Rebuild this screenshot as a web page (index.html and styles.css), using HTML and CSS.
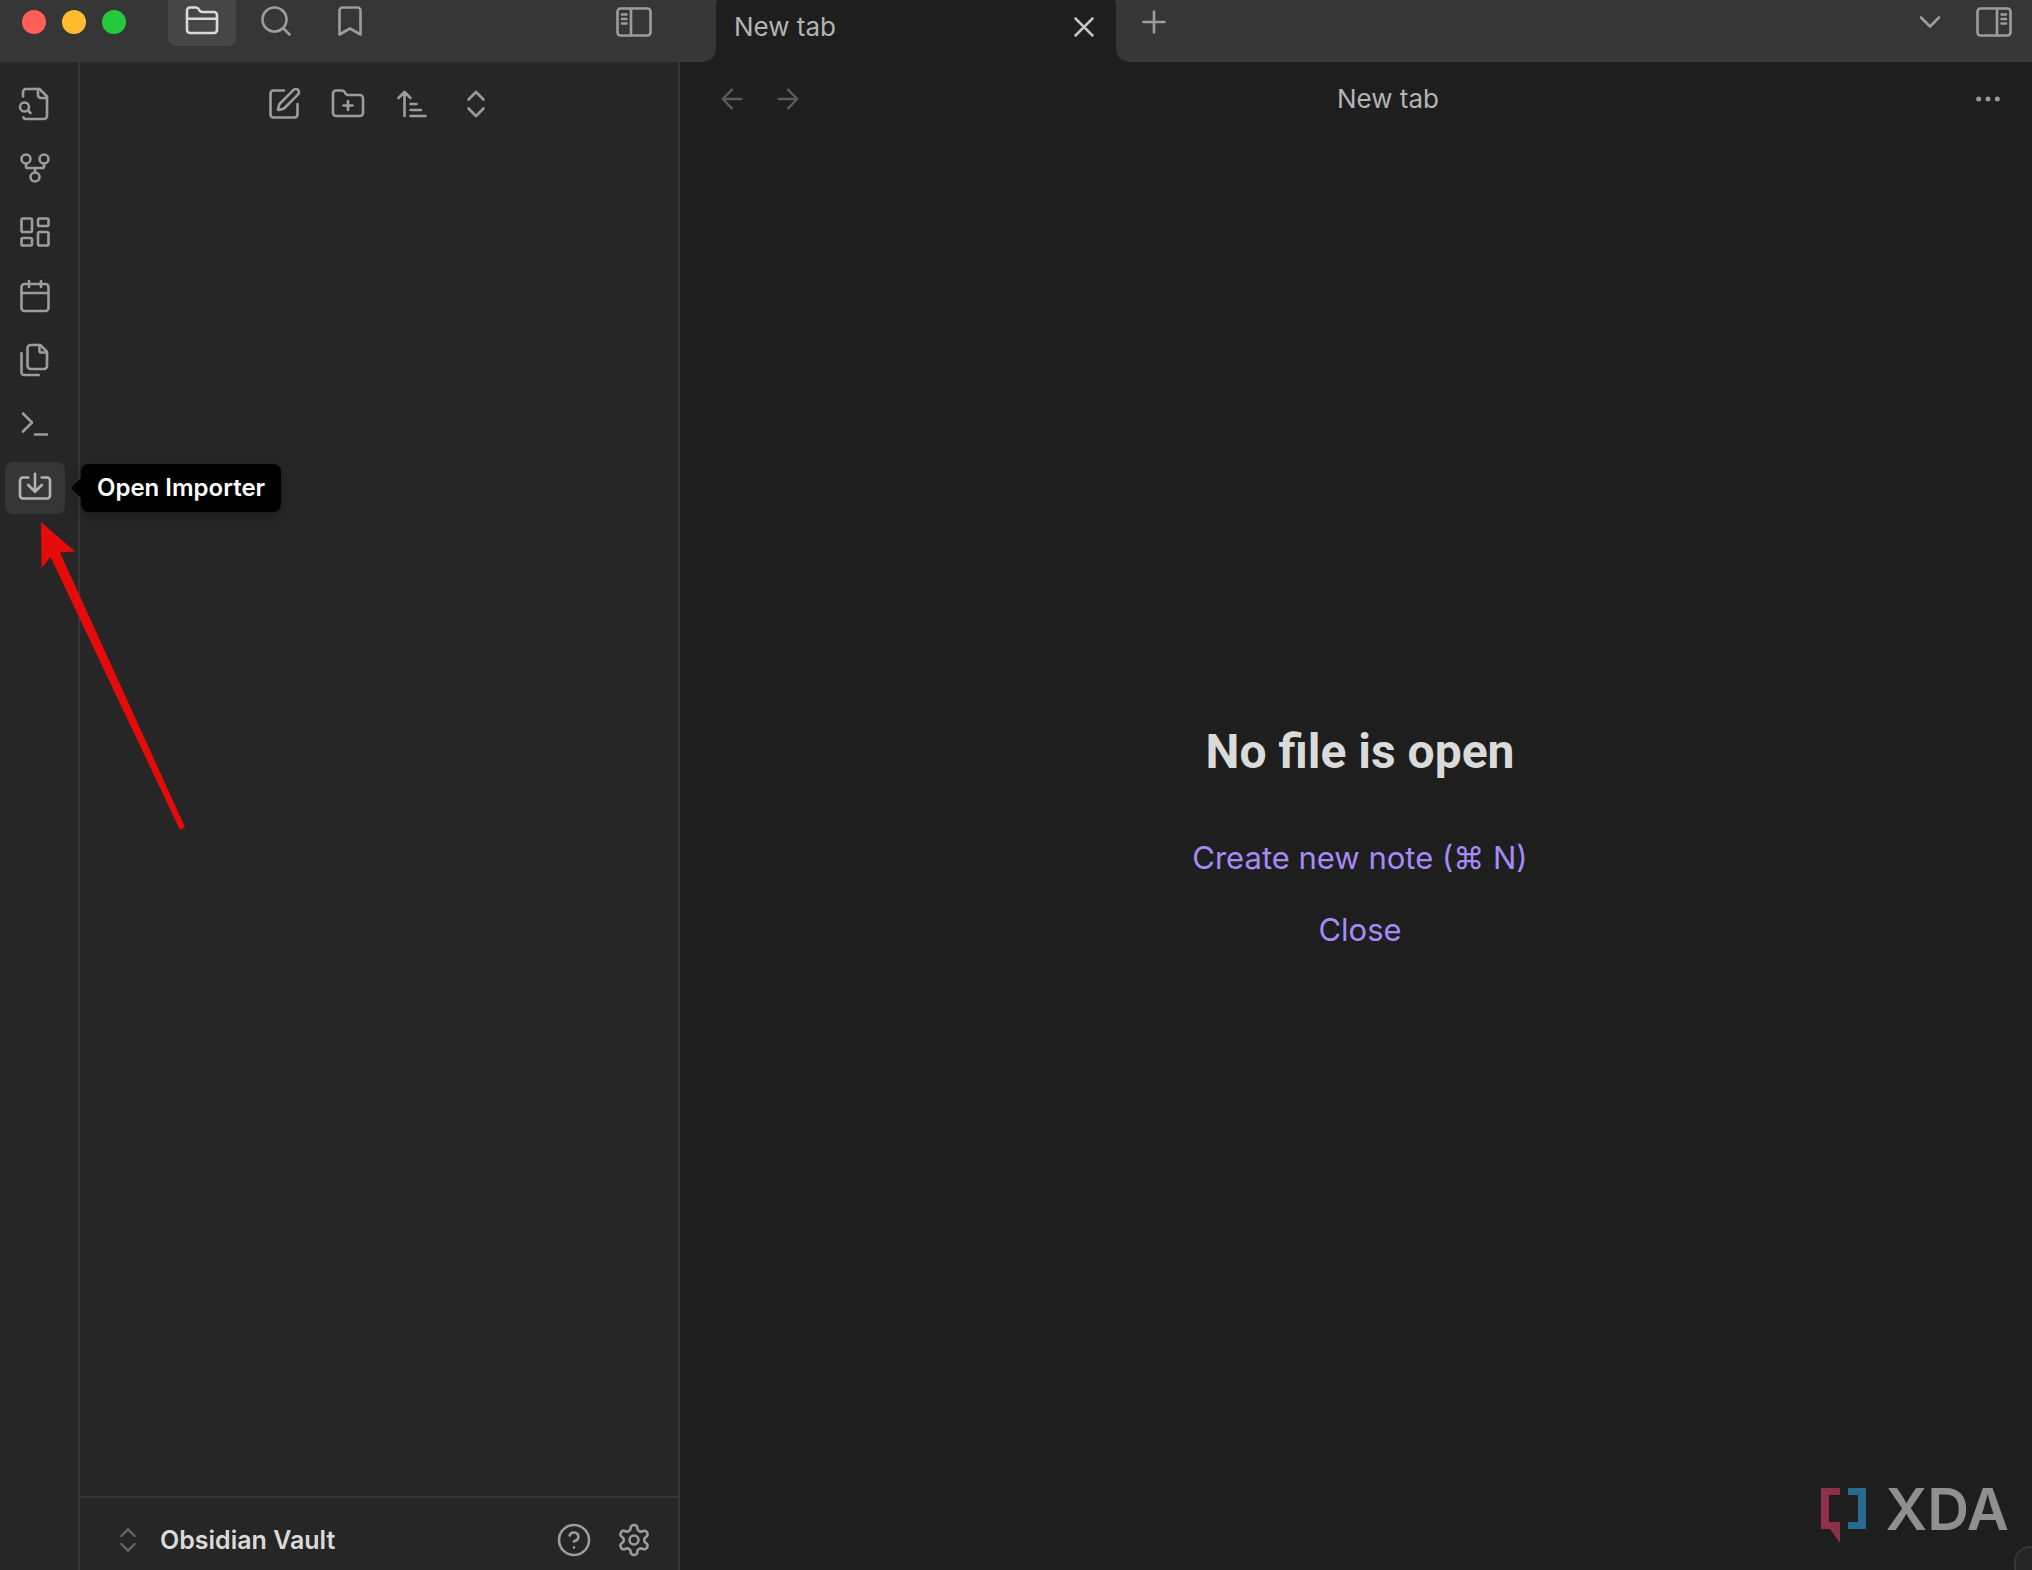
FILE: index.html
```html
<!DOCTYPE html>
<html lang="en">
<head>
<meta charset="utf-8">
<title>New tab - Obsidian Vault</title>
<link rel="stylesheet" href="styles.css">
</head>
<body>
<div class="app">
  <header class="titlebar">
    <div class="titlebar-left">
      <div class="lights"><span class="light red"></span><span class="light yellow"></span><span class="light green"></span></div>
      <div class="panel-tabs">
        <button class="bar-button active" aria-label="Files"><svg class="icon" viewBox="0 0 24 24"><path d="M20 20a2 2 0 0 0 2-2V8a2 2 0 0 0-2-2h-7.900a2 2 0 0 1-1.690-.9L9.600 3.900A2 2 0 0 0 7.930 3H4a2 2 0 0 0-2 2v13a2 2 0 0 0 2 2Z"/><path d="M2 10.500h20"/></svg></button>
        <button class="bar-button" aria-label="Search"><svg class="icon" viewBox="0 0 24 24"><circle cx="11" cy="11" r="8"/><path d="m21 21-4.300-4.300"/></svg></button>
        <button class="bar-button" aria-label="Bookmarks"><svg class="icon" viewBox="0 0 24 24"><path d="m19 21-7-4-7 4V5a2 2 0 0 1 2-2h10a2 2 0 0 1 2 2v16z"/></svg></button>
      </div>
      <button class="bar-button" aria-label="Collapse left sidebar"><svg class="icon" viewBox="0 0 24 24"><rect x="1" y="3" width="22" height="18" rx="2"/><path d="M10 3v18M4 7h3M4 10h3M4 13h3"/></svg></button>
    </div>
    <div class="tab">
      <span>New tab</span>
      <button class="tab-close" aria-label="Close tab"><svg class="icon" viewBox="0 0 24 24"><path d="M18 6 6 18M6 6l12 12"/></svg></button>
    </div>
    <button class="bar-button add-tab" aria-label="Add tab"><svg class="icon" viewBox="0 0 24 24"><path d="M5 12h14M12 5v14"/></svg></button>
    <div class="titlebar-right">
      <button class="bar-button narrow" aria-label="Tab list"><svg class="icon" viewBox="0 0 24 24"><path d="m6 9 6 6 6-6"/></svg></button>
      <button class="bar-button narrow" aria-label="Expand right sidebar"><svg class="icon" viewBox="0 0 24 24"><rect x="1" y="3" width="22" height="18" rx="2"/><path d="M14 3v18M17 7h3M17 10h3M17 13h3"/></svg></button>
    </div>
  </header>

  <div class="workspace">
    <nav class="ribbon" aria-label="Ribbon">
      <button class="tool" aria-label="Open quick switcher"><svg class="icon" viewBox="0 0 24 24"><path d="M14 2v4a2 2 0 0 0 2 2h4"/><path d="M4.268 21a2 2 0 0 0 1.727 1H18a2 2 0 0 0 2-2V7l-5-5H6a2 2 0 0 0-2 2v3"/><path d="m9 18-1.500-1.500"/><circle cx="5" cy="14" r="3"/></svg></button>
      <button class="tool" aria-label="Open graph view"><svg class="icon" viewBox="0 0 24 24"><circle cx="12" cy="18" r="3"/><circle cx="6" cy="6" r="3"/><circle cx="18" cy="6" r="3"/><path d="M18 9v2c0 .6-.4 1-1 1H7c-.6 0-1-.4-1-1V9M12 12v3"/></svg></button>
      <button class="tool" aria-label="Create new canvas"><svg class="icon" viewBox="0 0 24 24"><rect x="3" y="3" width="7" height="9" rx="1"/><rect x="14" y="3" width="7" height="5" rx="1"/><rect x="14" y="12" width="7" height="9" rx="1"/><rect x="3" y="16" width="7" height="5" rx="1"/></svg></button>
      <button class="tool" aria-label="Open today's daily note"><svg class="icon" viewBox="0 0 24 24"><rect x="3" y="4" width="18" height="18" rx="2"/><path d="M8 2v4M16 2v4M3 10h18"/></svg></button>
      <button class="tool" aria-label="Insert template"><svg class="icon" viewBox="0 0 24 24"><path d="M15 2v4a1 1 0 0 0 1 1h4"/><path d="M15.500 2H9a2 2 0 0 0-2 2v12a2 2 0 0 0 2 2h9a2 2 0 0 0 2-2V6.500L15.500 2z"/><path d="M3 7.600v12.800c0 .4.200.8.500 1.100.3.300.7.500 1.100.5h9.800"/></svg></button>
      <button class="tool" aria-label="Open command palette"><svg class="icon" viewBox="0 0 24 24"><path d="m4 17 6-6-6-6M12 19h8"/></svg></button>
      <div class="importer">
        <button class="tool hovered" aria-describedby="importer-tip" aria-label="Importer"><svg class="icon" viewBox="0 0 24 24"><path d="M16.500 5H20a2 2 0 0 1 2 2v10a2 2 0 0 1-2 2H4a2 2 0 0 1-2-2V7a2 2 0 0 1 2-2h3.500"/><path d="M12 2.500V14M7.500 10l4.500 4.500 4.500-4.500"/></svg></button>
        <span class="tooltip" id="importer-tip" role="tooltip">Open Importer</span>
        <svg class="pointer" viewBox="0 0 150 312" aria-hidden="true"><path d="M1 1 35 30.500 20 31.500 145 306 140 309 10.500 36 1.500 47Z"/></svg>
      </div>
    </nav>

    <aside class="sidebar">
      <div class="sidebar-tools">
        <button class="tool" aria-label="New note"><svg class="icon" viewBox="0 0 24 24"><path d="M12 3H5a2 2 0 0 0-2 2v14a2 2 0 0 0 2 2h14a2 2 0 0 0 2-2v-7"/><path d="M18.375 2.625a1 1 0 0 1 3 3l-9.013 9.014a2 2 0 0 1-.853.505l-2.873.84a.5.5 0 0 1-.62-.62l.84-2.873a2 2 0 0 1 .506-.852z"/></svg></button>
        <button class="tool" aria-label="New folder"><svg class="icon" viewBox="0 0 24 24"><path d="M12 10v6M9 13h6"/><path d="M20 20a2 2 0 0 0 2-2V8a2 2 0 0 0-2-2h-7.900a2 2 0 0 1-1.690-.9L9.600 3.900A2 2 0 0 0 7.930 3H4a2 2 0 0 0-2 2v13a2 2 0 0 0 2 2Z"/></svg></button>
        <button class="tool" aria-label="Change sort order"><svg class="icon" viewBox="0 0 24 24"><path d="m3 8 4-4 4 4M7 4v16M11 12h4M11 16h7M11 20h10"/></svg></button>
        <button class="tool" aria-label="Expand all"><svg class="icon" viewBox="0 0 24 24"><path d="m7 15 5 5 5-5M7 9l5-5 5 5"/></svg></button>
      </div>
      <div class="file-list"></div>
      <footer class="vault">
        <button class="vault-switch"><svg class="icon small faint" viewBox="0 0 24 24"><path d="m7 15 5 5 5-5M7 9l5-5 5 5"/></svg><span>Obsidian Vault</span></button>
        <button class="tool" aria-label="Help"><svg class="icon" viewBox="0 0 24 24"><circle cx="12" cy="12" r="10"/><path d="M9.090 9a3 3 0 0 1 5.830 1c0 2-3 3-3 3M12 17h.01"/></svg></button>
        <button class="tool" aria-label="Settings"><svg class="icon" viewBox="0 0 24 24"><path d="M12.220 2h-.44a2 2 0 0 0-2 2v.18a2 2 0 0 1-1 1.730l-.43.25a2 2 0 0 1-2 0l-.15-.08a2 2 0 0 0-2.730.73l-.22.38a2 2 0 0 0 .73 2.730l.15.1a2 2 0 0 1 1 1.720v.51a2 2 0 0 1-1 1.740l-.15.09a2 2 0 0 0-.73 2.730l.22.38a2 2 0 0 0 2.730.73l.15-.08a2 2 0 0 1 2 0l.43.25a2 2 0 0 1 1 1.730V20a2 2 0 0 0 2 2h.44a2 2 0 0 0 2-2v-.18a2 2 0 0 1 1-1.730l.43-.25a2 2 0 0 1 2 0l.15.08a2 2 0 0 0 2.730-.73l.22-.39a2 2 0 0 0-.73-2.730l-.15-.08a2 2 0 0 1-1-1.740v-.5a2 2 0 0 1 1-1.740l.15-.09a2 2 0 0 0 .73-2.730l-.22-.38a2 2 0 0 0-2.730-.73l-.15.08a2 2 0 0 1-2 0l-.43-.25a2 2 0 0 1-1-1.730V4a2 2 0 0 0-2-2z"/><circle cx="12" cy="12" r="3"/></svg></button>
      </footer>
    </aside>

    <main class="pane">
      <div class="pane-header">
        <div class="history">
          <button class="nav-button" aria-label="Back" disabled><svg class="icon small" viewBox="0 0 24 24"><path d="m12 19-7-7 7-7M19 12H5"/></svg></button>
          <button class="nav-button" aria-label="Forward" disabled><svg class="icon small" viewBox="0 0 24 24"><path d="M5 12h14M12 5l7 7-7 7"/></svg></button>
        </div>
        <span class="pane-title">New tab</span>
        <button class="nav-button" aria-label="More options"><svg class="icon small" viewBox="0 0 24 24"><circle cx="5" cy="12" r="1"/><circle cx="12" cy="12" r="1"/><circle cx="19" cy="12" r="1"/></svg></button>
      </div>
      <div class="empty">
        <h1>No file is open</h1>
        <a href="#new">Create new note (⌘ N)</a>
        <a href="#close">Close</a>
      </div>
      <div class="status"></div>
      <div class="brand">
        <svg class="brand-mark" viewBox="0 0 45 55" aria-hidden="true"><path class="brand-red" d="M0 0h19v7H8v27h11v21L9 41H0z"/><path class="brand-blue" d="M27 0h18v41H27v-7h10V7H27z"/></svg>
        <span>XDA</span>
      </div>
    </main>
  </div>
</div>
</body>
</html>
```
FILE: styles.css
```css
* { box-sizing: border-box; }

body {
  margin: 0;
  background: #1e1e1e;
  color: #b3b3b3;
  font-family: Inter, "Liberation Sans", sans-serif;
  font-size: 26px;
  line-height: 32px;
}

button {
  display: flex;
  align-items: center;
  justify-content: center;
  margin: 0;
  padding: 0;
  border: 0;
  background: none;
  color: #9c9c9c;
  font: inherit;
}

.icon {
  display: block;
  flex: none;
  width: 36px;
  height: 36px;
  fill: none;
  stroke: currentColor;
  stroke-width: 1.75;
  stroke-linecap: round;
  stroke-linejoin: round;
}
.icon.small { width: 32px; height: 32px; }
.icon.faint { color: #666; }

.app {
  display: flex;
  flex-direction: column;
  height: 100vh;
  overflow: hidden;
}

/* Title bar */
.titlebar {
  display: flex;
  align-items: flex-start;
  flex: none;
  height: 62px;
  background: #363636;
  border-bottom: 1px solid #3a3a3a;
}
.titlebar-left {
  display: flex;
  align-items: flex-start;
  flex: none;
  width: 716px;
  padding: 0 48px 0 22px;
}
.lights { display: flex; gap: 16px; padding-top: 10px; }
.light { width: 24px; height: 24px; border-radius: 50%; }
.red { background: #ff5f57; }
.yellow { background: #febc2e; }
.green { background: #24c93c; }
.panel-tabs { display: flex; gap: 6px; margin: 0 auto 0 42px; }

.bar-button {
  width: 68px;
  height: 46px;
  padding-bottom: 2px;
  border-radius: 0 0 8px 8px;
}
.panel-tabs .bar-button { padding-bottom: 4px; }
.bar-button.active { background: #464646; color: #dadada; }
.bar-button.narrow { width: 60px; }

.tab {
  position: relative;
  display: flex;
  align-items: center;
  justify-content: space-between;
  flex: none;
  width: 400px;
  height: 62px;
  padding: 0 14px 8px 18px;
  border-radius: 4px 4px 0 0;
  background: #1e1e1e;
}
.tab::before,
.tab::after {
  content: "";
  position: absolute;
  bottom: 0;
  width: 12px;
  height: 12px;
}
.tab::before { right: 100%; background: radial-gradient(circle at 0 0, transparent 11px, #1e1e1e 12px); }
.tab::after { left: 100%; background: radial-gradient(circle at 100% 0, transparent 11px, #1e1e1e 12px); }
.tab-close { width: 36px; height: 36px; color: #c4c4c4; }
.tab-close .icon { width: 34px; height: 34px; }
.add-tab { margin-left: 4px; }
.titlebar-right { display: flex; gap: 4px; margin-left: auto; padding-right: 8px; }

/* Ribbon and file sidebar */
.workspace { display: flex; flex: 1; min-height: 0; }
.ribbon {
  display: flex;
  flex-direction: column;
  gap: 12px;
  flex: none;
  width: 80px;
  padding: 16px 0 0 5px;
  background: #262626;
  border-right: 2px solid #363636;
}
.tool { width: 60px; height: 52px; border-radius: 8px; }
.tool.hovered { background: #363636; color: #b3b3b3; }
.importer { position: relative; z-index: 2; }
.tooltip {
  position: absolute;
  top: 2px;
  left: 76px;
  padding: 8px 16px;
  border-radius: 8px;
  background: #000;
  box-shadow: 0 4px 12px rgba(0, 0, 0, .3);
  color: #fff;
  font-size: 24px;
  font-weight: 600;
  white-space: nowrap;
}
.tooltip::before {
  content: "";
  position: absolute;
  top: 14px;
  right: 100%;
  border: solid transparent;
  border-width: 10px 10px 10px 0;
  border-right-color: #000;
}
.pointer {
  position: absolute;
  top: 59px;
  left: 35px;
  width: 150px;
  height: 312px;
  fill: #e50b0b;
}

.sidebar {
  display: flex;
  flex-direction: column;
  flex: none;
  width: 600px;
  background: #262626;
  border-right: 2px solid #363636;
}
.sidebar-tools {
  display: flex;
  justify-content: center;
  gap: 4px;
  padding: 16px 0 16px 2px;
}
.file-list { flex: 1; }
.vault {
  display: flex;
  align-items: center;
  height: 74px;
  padding: 12px 14px 0 32px;
  border-top: 2px solid #363636;
}
.vault-switch {
  gap: 16px;
  margin-right: auto;
  color: #dadada;
  font-size: 25px;
  font-weight: 600;
}

/* Editor pane */
.pane {
  position: relative;
  display: flex;
  flex-direction: column;
  flex: 1;
  min-width: 0;
}
.pane-header {
  display: flex;
  align-items: center;
  height: 74px;
  padding: 0 18px 0 26px;
}
.history { display: flex; gap: 4px; }
.nav-button { width: 52px; height: 40px; }
.nav-button:disabled { color: #5c5c5c; }
.pane-title { flex: 1; text-align: center; }
.empty {
  display: flex;
  flex: 1;
  flex-direction: column;
  align-items: center;
  justify-content: center;
  padding: 0 0 18px 8px;
}
.empty h1 {
  margin: 0 0 40px;
  color: #dadada;
  font-family: Roboto, Inter, sans-serif;
  font-size: 48px;
  font-weight: 700;
  line-height: 60px;
}
.empty a {
  color: #a68af9;
  font-size: 31px;
  line-height: 72px;
  text-decoration: none;
}
.status {
  position: absolute;
  right: 0;
  bottom: 0;
  width: 18px;
  height: 24px;
  border: 2px solid #363636;
  border-width: 2px 0 0 2px;
  border-radius: 16px 0 0 0;
  background: #262626;
}
.brand {
  position: absolute;
  right: 23px;
  bottom: 27px;
  display: flex;
  justify-content: space-between;
  width: 188px;
  color: #8f8f8f;
  font-size: 58px;
  font-weight: 600;
  line-height: 42px;
}
.brand-mark { width: 45px; height: 55px; }
.brand-red { fill: #8d3048; }
.brand-blue { fill: #27698f; }
```
